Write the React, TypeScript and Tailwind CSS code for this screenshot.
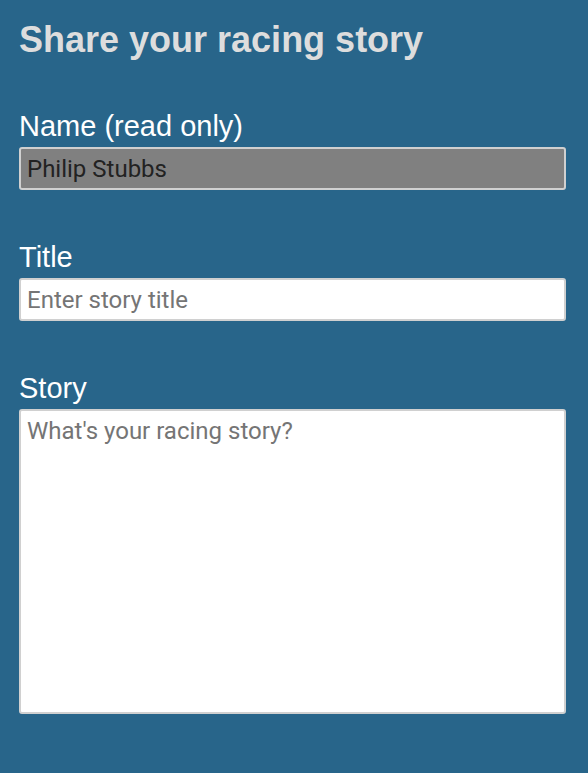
import React, { useState } from 'react';

const App: React.FC = () => {
    const [title, setTitle] = useState('');
    const [story, setStory] = useState('');

    return (
        <div className="min-h-[773px] bg-[#28658a] pl-[19px] pr-[22px] pt-[20px] pb-[40px] font-['Liberation_Sans',Arial,sans-serif]">
            <h1 className="text-[36px] font-bold leading-[40px] text-[#dddddd]">Share your racing story</h1>

            <form className="mt-[50px] flex flex-col">
                <label className="text-[29px] leading-[32px] text-white">Name (read only)</label>
                <input
                    type="text"
                    value="Philip Stubbs"
                    readOnly
                    className="mt-[5px] h-[43px] w-full rounded-[3px] border-2 border-[#d0d0d0] bg-[#808080] px-[6px] font-['Roboto',sans-serif] text-[24px] text-[#222222] outline-none"
                />

                <label className="mt-[51px] text-[29px] leading-[32px] text-white">Title</label>
                <input
                    type="text"
                    value={title}
                    onChange={(e) => setTitle(e.target.value)}
                    placeholder="Enter story title"
                    className="mt-[5px] h-[43px] w-full rounded-[3px] border-2 border-[#d0d0d0] bg-white px-[6px] font-['Roboto',sans-serif] text-[24px] text-[#222222] placeholder-[#757575] outline-none"
                />

                <label className="mt-[51px] text-[29px] leading-[32px] text-white">Story</label>
                <textarea
                    value={story}
                    onChange={(e) => setStory(e.target.value)}
                    placeholder="What's your racing story?"
                    className="mt-[5px] h-[305px] w-full resize-none rounded-[3px] border-2 border-[#d0d0d0] bg-white px-[6px] py-[6px] font-['Roboto',sans-serif] text-[24px] leading-[28px] text-[#222222] placeholder-[#757575] outline-none"
                />
            </form>
        </div>
    );
};

export default App;
